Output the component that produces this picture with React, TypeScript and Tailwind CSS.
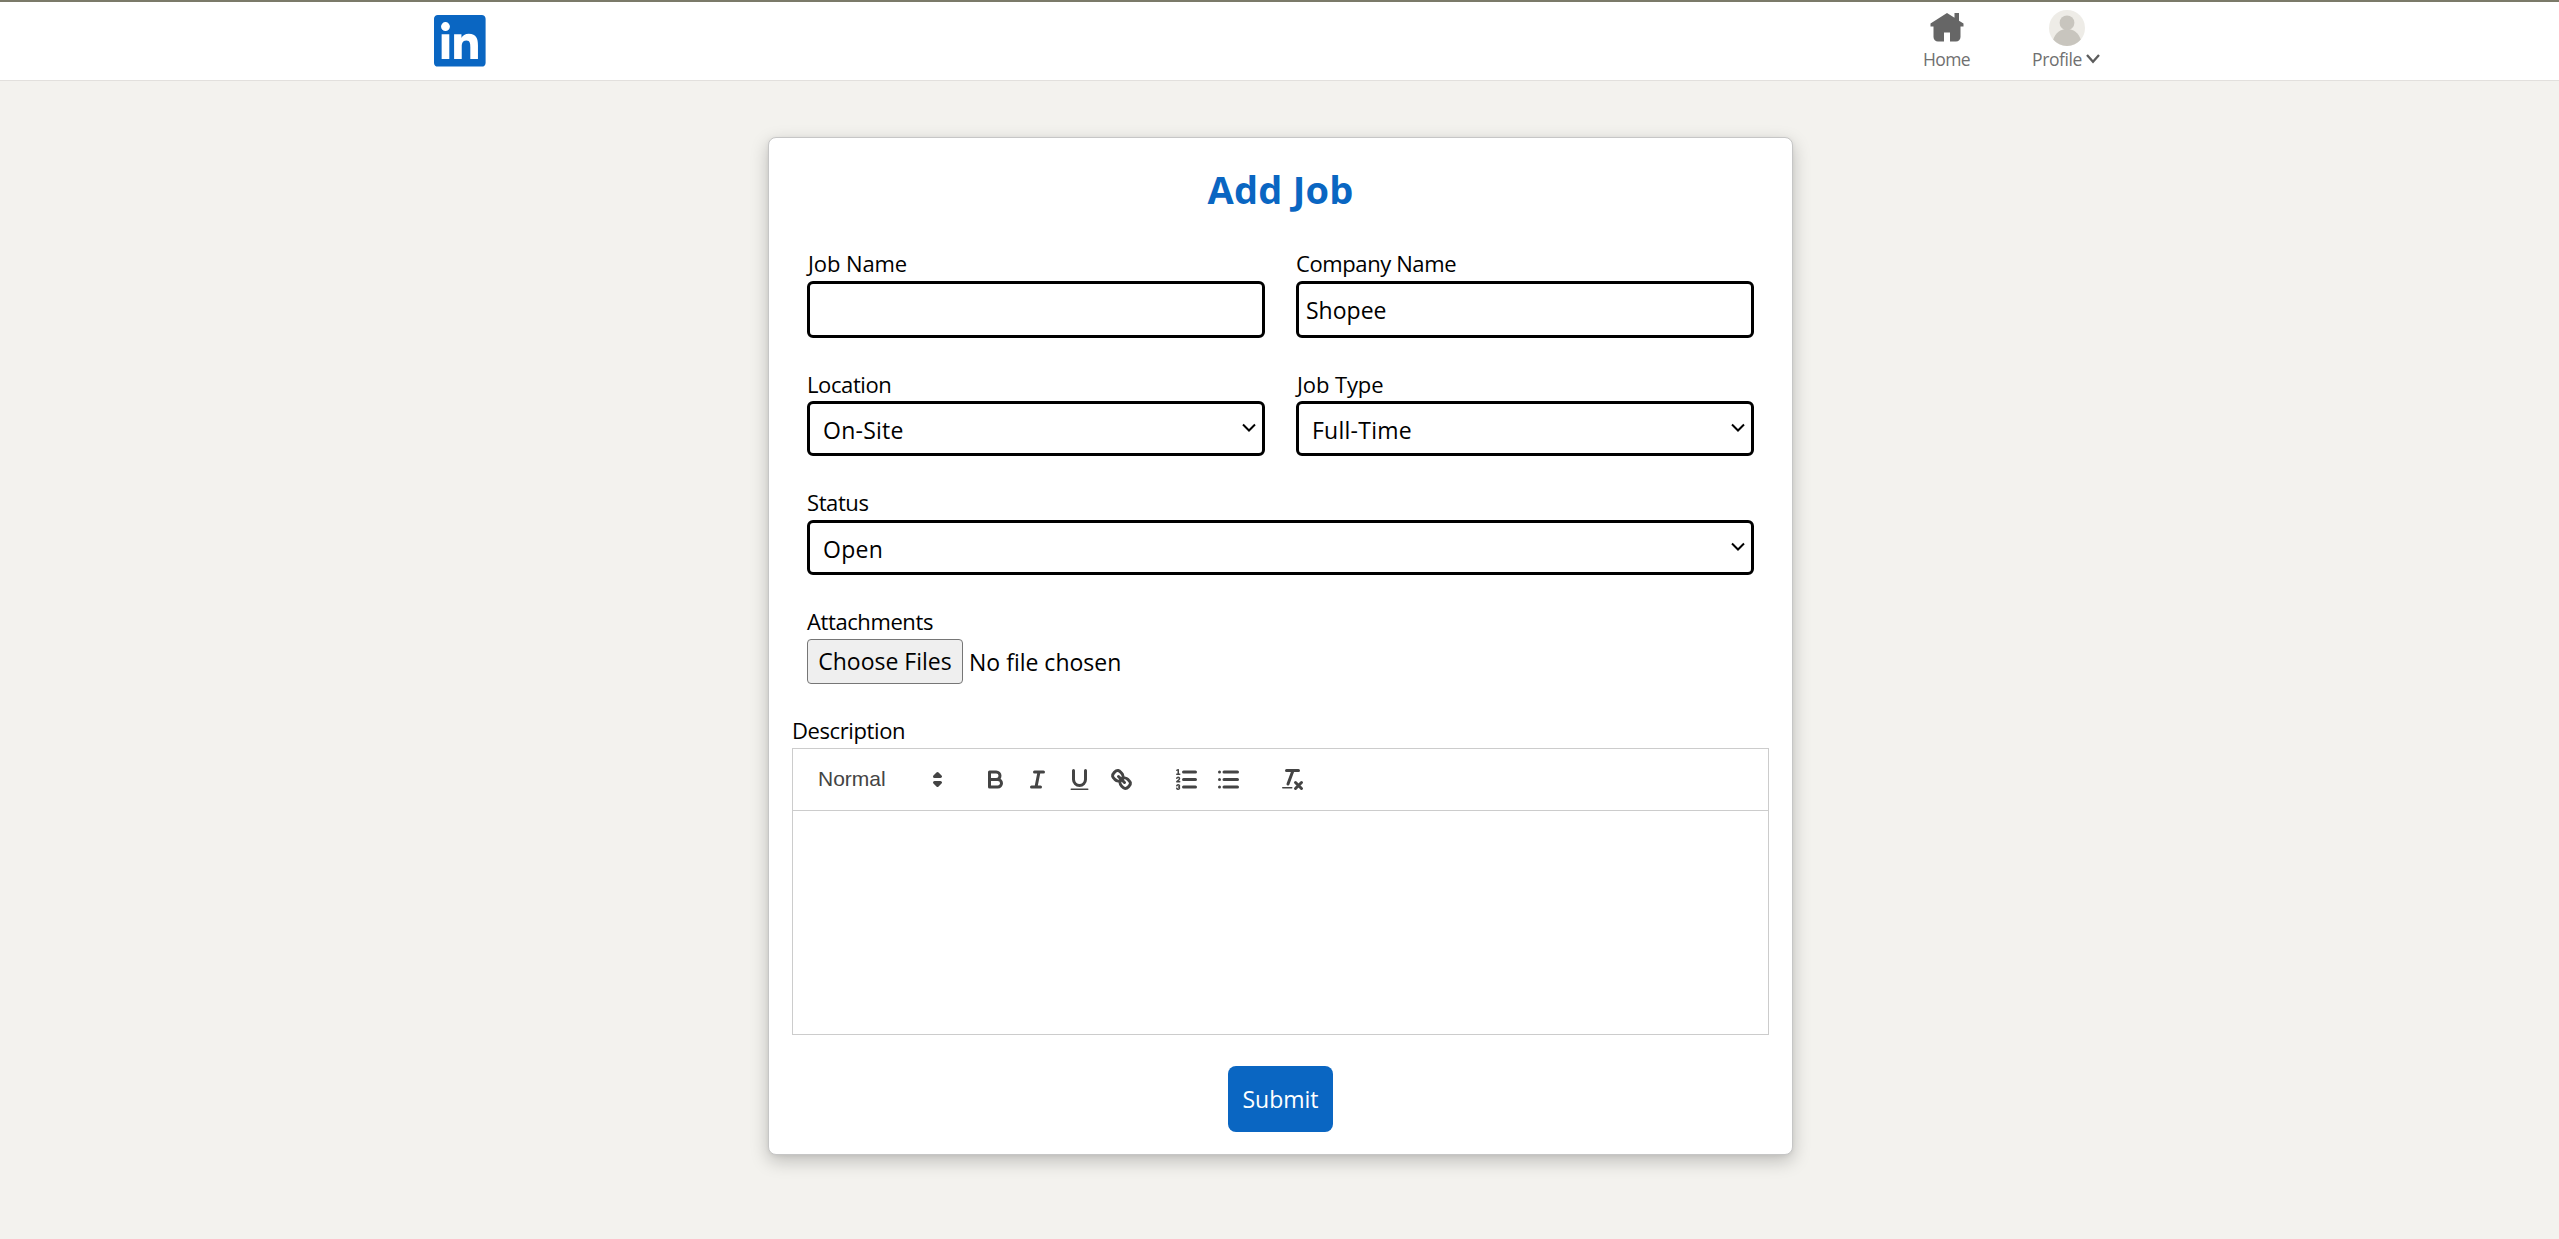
import type { ReactNode } from "react";

const labelText = "text-[22px] tracking-[-0.4px]";
const looseLabelText = "text-[22px] tracking-[-0.1px]";

function LinkedInLogo() {
  return (
    <svg viewBox="0 0 24 24" className="h-[51.6px] w-[51.6px] fill-[#0a66c2]" aria-label="LinkedIn">
      <path d="M20.447 20.452h-3.554v-5.569c0-1.328-.027-3.037-1.852-3.037-1.853 0-2.136 1.445-2.136 2.939v5.667H9.351V9h3.414v1.561h.046c.477-.9 1.637-1.85 3.37-1.85 3.601 0 4.267 2.37 4.267 5.455v6.286zM5.337 7.433a2.062 2.062 0 0 1-2.063-2.065 2.064 2.064 0 1 1 2.063 2.065zm1.782 13.019H3.555V9h3.564v11.452zM22.225 0H1.771C.792 0 0 .774 0 1.729v20.542C0 23.227.792 24 1.771 24h20.451C23.2 24 24 23.227 24 22.271V1.729C24 .774 23.2 0 22.222 0h.003z" />
    </svg>
  );
}

function Header() {
  return (
    <header className="flex h-[81px] justify-between border-t-2 border-b border-t-[#7b7a69] border-b-[#e2e0dd] bg-white pr-[458px] pl-[434px]">
      <a href="#" className="mt-[13px] h-[52px]">
        <LinkedInLogo />
      </a>
      <nav className="flex text-[17.5px] leading-6 text-[#707070]">
        <a href="#" className="mr-[62px] flex w-[47px] flex-col items-center pt-2">
          <svg viewBox="0 0 24 24" className="h-9 w-9 fill-[#666]">
            <path d="M23 9v2h-2v7a3 3 0 01-3 3h-4v-6h-4v6H6a3 3 0 01-3-3v-7H1V9l11-7 5 3.18V2h3v5.09z" />
          </svg>
          <span className="mt-px tracking-[-0.55px]">Home</span>
        </a>
        <a href="#" className="flex w-[69px] flex-col pt-2">
          <svg viewBox="0 0 36 36" className="ml-[17px] h-9 w-9">
            <circle cx="18" cy="18" r="18" fill="#eeece7" />
            <circle cx="18" cy="12.8" r="7.4" fill="#c8c5be" />
            <path d="M4.2 29.5C6.6 23 11.4 19 18 19s11.4 4 13.8 10.5A18 18 0 0 1 4.2 29.5Z" fill="#c8c5be" />
          </svg>
          <span className="mt-px flex items-center gap-1 tracking-[-0.4px]">
            Profile
            <svg viewBox="0 0 14 10" className="h-2.5 w-3.5 fill-none stroke-[#5c5c5c] stroke-[2.3]">
              <path d="M1 1 7 7.8 13 1" />
            </svg>
          </span>
        </a>
      </nav>
    </header>
  );
}

function Chevron() {
  return (
    <svg
      viewBox="0 0 14 9"
      className="pointer-events-none absolute top-[22px] right-[9px] h-[9px] w-[14px] fill-none stroke-black stroke-2"
    >
      <path d="M1 1.5 7 7.5 13 1.5" />
    </svg>
  );
}

function Select({ id, options }: { id: string; options: string[] }) {
  return (
    <div className="relative">
      <select
        id={id}
        className="block h-[55px] w-full appearance-none rounded-md border-[3px] border-black bg-white pt-[3px] pl-[13px] text-[23px] leading-8 tracking-[0.25px]"
      >
        {options.map((o) => (
          <option key={o}>{o}</option>
        ))}
      </select>
      <Chevron />
    </div>
  );
}

function ToolButton({ label, children }: { label: string; children: ReactNode }) {
  return (
    <button type="button" aria-label={label} className="flex h-9 w-[42px] items-center justify-center">
      <svg
        viewBox="0 0 18 18"
        className="h-[27px] w-[27px] fill-none stroke-[#444] stroke-2 [stroke-linecap:round] [stroke-linejoin:round]"
      >
        {children}
      </svg>
    </button>
  );
}

function Toolbar() {
  return (
    <div className="flex h-[62px] items-center gap-[22.5px] border-b border-[#ccc] pl-3">
      <button
        type="button"
        className="flex h-9 w-[147px] items-center justify-between pr-[1.5px] pb-px pl-[13px] font-['Liberation_Sans',sans-serif] text-[21px] text-[#444]"
      >
        Normal
        <svg
          viewBox="0 0 18 18"
          className="h-[27px] w-[27px] fill-[#444] stroke-[#444] stroke-2 [stroke-linecap:round] [stroke-linejoin:round]"
        >
          <polygon points="7 11 9 13 11 11 7 11" />
          <polygon points="7 7 9 5 11 7 7 7" />
        </svg>
      </button>
      <div className="flex">
        <ToolButton label="Bold">
          <path d="M5,4H9.5A2.5,2.5,0,0,1,12,6.5v0A2.5,2.5,0,0,1,9.5,9H5Z" />
          <path d="M5,9h5.5A2.5,2.5,0,0,1,13,11.5v0A2.5,2.5,0,0,1,10.5,14H5Z" />
        </ToolButton>
        <ToolButton label="Italic">
          <path d="M7 4H13M5 14H11M8 14 10 4" />
        </ToolButton>
        <ToolButton label="Underline">
          <path d="M5,3V9a4.012,4.012,0,0,0,4,4H9a4.012,4.012,0,0,0,4-4V3" />
          <rect x="3" y="15" width="12" height="1" rx="0.5" className="fill-[#444] stroke-none" />
        </ToolButton>
        <ToolButton label="Link">
          <path d="M7 7 11 11" />
          <path d="M8.9,4.577a3.476,3.476,0,0,1,.36,4.679A3.476,3.476,0,0,1,4.577,8.9C3.185,7.5,2.035,6.4,4.217,4.217S7.5,3.185,8.9,4.577Z" />
          <path d="M13.423,9.1a3.476,3.476,0,0,0-4.679-.36,3.476,3.476,0,0,0,.36,4.679c1.392,1.392,2.5,2.542,4.679.36S14.815,10.5,13.423,9.1Z" />
        </ToolButton>
      </div>
      <div className="flex">
        <ToolButton label="Numbered list">
          <path d="M7 4H15M7 9H15M7 14H15" />
          <path className="stroke-1" d="M2.5 5.5H4.5" />
          <path
            className="fill-[#444] stroke-none"
            d="M3.5,6A0.5,0.5,0,0,1,3,5.5V3.085l-0.276.138A0.5,0.5,0,0,1,2.053,3c-0.124-.247-0.023-0.324.224-0.447l1-.5A0.5,0.5,0,0,1,4,2.5v3A0.5,0.5,0,0,1,3.5,6Z"
          />
          <path className="stroke-1" d="M4.5,10.5h-2c0-.234,1.85-1.076,1.85-2.234A0.959,0.959,0,0,0,2.5,8.156" />
          <path
            className="stroke-1"
            d="M2.5,14.846a0.959,0.959,0,0,0,1.85-.109A0.7,0.7,0,0,0,3.75,14a0.688,0.688,0,0,0,.6-0.736,0.959,0.959,0,0,0-1.85-.109"
          />
        </ToolButton>
        <ToolButton label="Bulleted list">
          <path d="M6 4H15M6 9H15M6 14H15M3 4H3M3 9H3M3 14H3" />
        </ToolButton>
      </div>
      <ToolButton label="Clear formatting">
        <path d="M5 3H13M6 12 9.35 3M11 11 15 15M15 11 11 15" />
        <rect x="2" y="14" width="7" height="1" rx="0.5" className="fill-[#444] stroke-none" />
      </ToolButton>
    </div>
  );
}

export default function App() {
  return (
    <div className="min-h-[1239px] bg-[#f3f2ee] font-['Open_Sans','Noto_Sans',sans-serif] text-black">
      <Header />
      <main className="pt-14 pl-0.5">
        <form className="mx-auto flex h-[1018px] w-[1025px] flex-col rounded-lg border border-[#c6c6c6] bg-white px-[23px] pt-[22px] shadow-[0_6px_18px_rgba(0,0,0,0.22),0_1px_4px_rgba(0,0,0,0.06)]">
          <h1 className="text-center text-[38px] leading-[58px] font-bold tracking-[0.25px] text-[#0a66c2]">Add Job</h1>

          <div className="mt-[29px] grid grid-cols-2 gap-x-[31px] px-[15px]">
            <div>
              <label htmlFor="job" className={`block pb-0.5 pl-px leading-[32px] ${looseLabelText}`}>Job Name</label>
              <input id="job" className="block h-[57px] w-full rounded-md border-[3px] border-black px-2 text-[23px]" />
            </div>
            <div>
              <label htmlFor="company" className={`block pb-0.5 leading-[32px] ${labelText}`}>Company Name</label>
              <input
                id="company"
                defaultValue="Shopee"
                className="block h-[57px] w-full rounded-md border-[3px] border-black px-[7px] text-[23px]"
              />
            </div>
            <div className="mt-[30px]">
              <label htmlFor="location" className={`block leading-[33px] ${labelText}`}>Location</label>
              <Select id="location" options={["On-Site", "Remote", "Hybrid"]} />
            </div>
            <div className="mt-[30px]">
              <label htmlFor="type" className={`block pl-px leading-[33px] ${looseLabelText}`}>Job Type</label>
              <Select id="type" options={["Full-Time", "Part-Time"]} />
            </div>
            <div className="col-span-2 mt-[29px]">
              <label htmlFor="status" className={`block leading-[35px] ${labelText}`}>Status</label>
              <Select id="status" options={["Open", "Closed"]} />
            </div>
            <div className="col-span-2 mt-[29px]">
              <div className={`leading-[35px] ${labelText}`}>Attachments</div>
              <div className="flex h-[45px] text-[23px]">
                <button
                  type="button"
                  className="h-[45px] w-[156px] rounded-[4px] border border-[#767676] bg-[#efefef] leading-[43px] whitespace-nowrap"
                >
                  Choose Files
                </button>
                <span className="ml-[6px] leading-[47px]">No file chosen</span>
              </div>
            </div>
          </div>

          <div className={`mt-[29px] leading-[35px] ${labelText}`}>Description</div>
          <div className="h-[287px] border border-[#ccc]">
            <Toolbar />
          </div>

          <button type="submit" className="mx-auto mt-[31px] h-[66px] w-[105px] rounded-lg bg-[#0a66c2] pt-px text-[23px] text-white">
            Submit
          </button>
        </form>
      </main>
    </div>
  );
}
